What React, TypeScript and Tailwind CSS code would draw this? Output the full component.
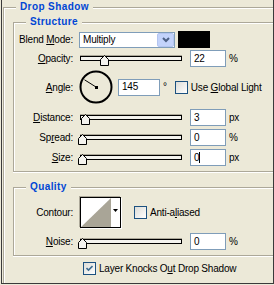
import React from 'react';

const BG = 'bg-[#ECE9D8]';

function U({ children }: { children: React.ReactNode }) {
  return <span className="underline decoration-1 underline-offset-[1px]">{children}</span>;
}

function GroupBox({ title, className, children }: { title: string, className?: string, children: React.ReactNode }) {
  return (
    <div className={`relative border border-r-0 border-[#ACA899] shadow-[inset_1px_1px_0_#fff,0_1px_0_#fff] ${className || ''}`}>
      <span className={`absolute -top-[7px] left-[12px] px-[4px] ${BG} text-[10px] leading-[12px] font-bold tracking-[0.4px] text-[#0046D5]`}>{title}</span>
      {children}
    </div>
  );
}

function Label({ children }: { children: React.ReactNode }) {
  return <div className="w-[59px] text-right shrink-0">{children}</div>;
}

function Slider({ value }: { value: number }) {
  // value = thumb left offset in px
  return (
    <div className="relative w-[105px] h-[11px] -ml-[1px] self-start mt-[5px] shrink-0">
      <div className="absolute left-[2px] top-[1px] w-[102px] h-[5px] border border-black bg-[#F4F3EE] shadow-[0_-1px_0_#ACA899]" />
      <svg className="absolute top-0" style={{ left: value }} width="9" height="11" viewBox="0 0 9 11">
        <polygon points="0.5,4.5 4.5,0.5 8.5,4.5 8.5,10.5 0.5,10.5" fill="#F4F3EE" stroke="#000" strokeWidth="1" />
      </svg>
    </div>
  );
}

function NumBox({ value, caret, className }: { value: string, caret?: boolean, className?: string }) {
  return (
    <div className={`h-[17px] bg-white border border-[#7F9DB9] pl-[3px] flex items-center leading-none shrink-0 ${className || 'w-[36px]'}`}>
      {value}
      {caret && <span className="inline-block w-px h-[11px] bg-black" />}
    </div>
  );
}

function Check({ checked }: { checked?: boolean }) {
  return (
    <div className="w-[13px] h-[13px] border border-[#1C5180] bg-gradient-to-br from-[#DCDCD7] to-white flex items-center justify-center shrink-0">
      {checked && (
        <svg width="7" height="7" viewBox="0 0 7 7">
          <path d="M0.5 3 L2.5 5 L6.5 1" fill="none" stroke="#3E6D92" strokeWidth="1.6" />
        </svg>
      )}
    </div>
  );
}

function SliderRow({ label, thumb, value, unit, caret, mt }: { label: React.ReactNode, thumb: number, value: string, unit: string, caret?: boolean, mt: string }) {
  return (
    <div className={`flex items-center h-[17px] ${mt}`}>
      <Label>{label}</Label>
      <div className="ml-[6px]" />
      <Slider value={thumb} />
      <NumBox value={value} caret={caret} className="w-[36px] ml-[7px]" />
      <span className="ml-[3px]">{unit}</span>
    </div>
  );
}

export default function App() {
  return (
    <div className={`w-[274px] h-[285px] overflow-hidden ${BG} pl-[1px] text-[10px] tracking-[-0.2px] text-black font-['Liberation_Sans',Arial,sans-serif]`}>
      <div className="w-[273px] h-[284px] overflow-hidden border-l border-r border-b border-[#3A3A3A] pt-[7px] pl-[1px]">
        <GroupBox title="Drop Shadow" className="w-[300px] h-[300px]">
          <GroupBox title="Structure" className="ml-[9px] mt-[14px] pb-[5px]">
            <div className="flex items-center h-[17px] mt-[8px]">
              <Label>Blend <U>M</U>ode:</Label>
              <div className="ml-[6px] w-[96px] h-[16px] bg-white border border-[#7F9DB9] flex items-center pl-[3px] justify-between">
                <span>Multiply</span>
                <div className="w-[17px] h-[14px] bg-[#C3D3FB] border border-[#B4C5F0] rounded-[2px] flex items-center justify-center">
                  <svg width="8" height="6" viewBox="0 0 8 6">
                    <path d="M1 1 L4 4 L7 1" fill="none" stroke="#4D6185" strokeWidth="2" />
                  </svg>
                </div>
              </div>
              <div className="ml-[3px] w-[32px] h-[17px] bg-black" />
            </div>

            <SliderRow label={<><U>O</U>pacity:</>} thumb={22} value="22" unit="%" mt="mt-[2px]" />

            <div className="flex items-center h-[34px] mt-[3px]">
              <Label><U>A</U>ngle:</Label>
              <svg className="ml-[6px] shrink-0" width="34" height="34" viewBox="0 0 34 34">
                <circle cx="17" cy="17" r="15.5" fill="none" stroke="#000" strokeWidth="2" />
                <line x1="17" y1="17" x2="5.5" y2="9.8" stroke="#000" strokeWidth="1" />
                <rect x="16" y="16" width="3" height="3" fill="#000" />
              </svg>
              <NumBox value="145" className="w-[42px] ml-[5px]" />
              <span className="ml-[3px] self-start mt-[9px]">°</span>
              <div className="ml-[8px]"><Check /></div>
              <span className="ml-[3px]">Use <U>G</U>lobal Light</span>
            </div>

            <SliderRow label={<><U>D</U>istance:</>} thumb={3} value="3" unit="px" mt="mt-[5px]" />
            <SliderRow label={<>Sp<U>r</U>ead:</>} thumb={0} value="0" unit="%" mt="mt-[3px]" />
            <SliderRow label={<><U>S</U>ize:</>} thumb={0} value="0" caret unit="px" mt="mt-[3px]" />
          </GroupBox>

          <GroupBox title="Quality" className="ml-[9px] mt-[15px] pb-[5px]">
            <div className="flex items-center h-[33px] mt-[8px]">
              <Label>Contour:</Label>
              <div className="ml-[7px] w-[41px] h-[31px] border border-black bg-white shadow-[-1px_-1px_0_#ACA899,1px_1px_0_#fff] flex shrink-0">
                <svg width="30" height="29" viewBox="0 0 30 29">
                  <polygon points="0,29 30,0 30,29" fill="#A9A597" />
                </svg>
                <div className="flex-1 flex justify-center pt-[11px]">
                  <svg width="5" height="3" viewBox="0 0 5 3">
                    <polygon points="0,0 5,0 2.5,3" fill="#000" />
                  </svg>
                </div>
              </div>
              <div className="ml-[13px]"><Check /></div>
              <span className="ml-[3px]">Anti-a<U>l</U>iased</span>
            </div>
            <SliderRow label={<><U>N</U>oise:</>} thumb={0} value="0" unit="%" mt="mt-[4px]" />
          </GroupBox>

          <div className="flex items-center mt-[6px] ml-[79px] h-[13px]">
            <Check checked />
            <span className="ml-[3px]">Layer Knocks O<U>u</U>t Drop Shadow</span>
          </div>
        </GroupBox>
      </div>
    </div>
  );
}
